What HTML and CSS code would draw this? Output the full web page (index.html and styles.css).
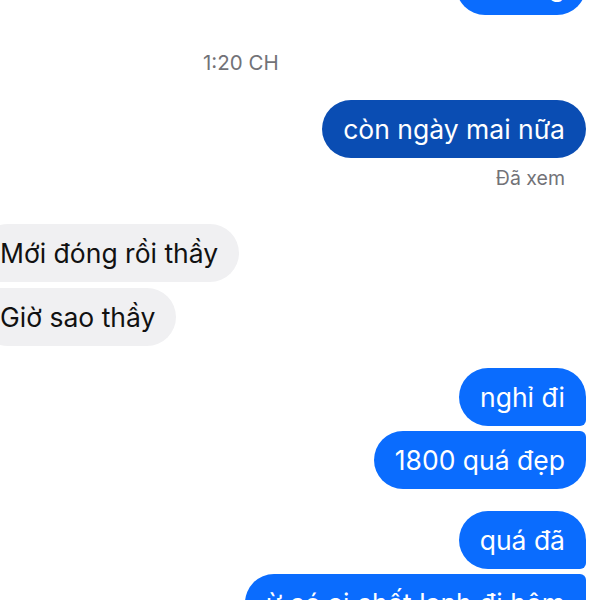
FILE: index.html
```html
<!DOCTYPE html>
<html lang="vi">
<head>
  <meta charset="UTF-8">
  <title>Tin nhắn</title>
  <meta name="viewport" content="width=device-width, initial-scale=1.0">
  <link rel="stylesheet" href="styles.css">
</head>
<body>

<div class="thread">
  <div class="bubble me first">ừ đúng</div>

  <div class="time">1:20 CH</div>

  <div class="bubble me seen">còn ngày mai nữa</div>
  <div class="status">Đã xem</div>

  <div class="bubble them top">Mới đóng rồi thầy</div>
  <div class="bubble them bottom">Giờ sao thầy</div>

  <div class="bubble me top group-start">nghỉ đi</div>
  <div class="bubble me bottom">1800 quá đẹp</div>

  <div class="bubble me top group-start">quá đã</div>
  <div class="bubble me bottom">ừ có ai chết lạnh đi hôm</div>
</div>

</body>
</html>
```

FILE: styles.css
```css
html, body {
  margin: 0;
  padding: 0;
  background-color: #fff;
  font-family: Inter, "Noto Sans", sans-serif;
  overflow: hidden;
  height: 600px;
}

.thread {
  display: flex;
  flex-direction: column;
  padding-right: 14px;
  margin-top: -43px;
}

.bubble {
  font-size: 26.5px;
  line-height: 30px;
  padding: 14px 21px;
  border-radius: 29px;
  white-space: nowrap;
  max-width: 480px;
  color: #fff;
}

.me {
  align-self: flex-end;
  background-color: #0a6cfe;
}

.me.seen {
  background-color: #0a4db3;
}

.them {
  align-self: flex-start;
  background-color: #f0f0f2;
  color: #111;
  margin-left: -21px;
}

.me.top {
  border-bottom-right-radius: 6px;
}

.me.bottom {
  border-top-right-radius: 6px;
  margin-top: 5px;
}

.them.top {
  margin-top: 36px;
  border-bottom-left-radius: 6px;
}

.them.bottom {
  border-top-left-radius: 6px;
  margin-top: 6px;
}

.group-start {
  margin-top: 22px;
}

.time {
  align-self: flex-start;
  margin: 38px 0 27px 203px;
  font-size: 20.5px;
  line-height: 20px;
  color: #727277;
}

.status {
  align-self: flex-end;
  margin: 10px 21px 0 0;
  font-size: 19.5px;
  line-height: 20px;
  color: #727277;
}
```
